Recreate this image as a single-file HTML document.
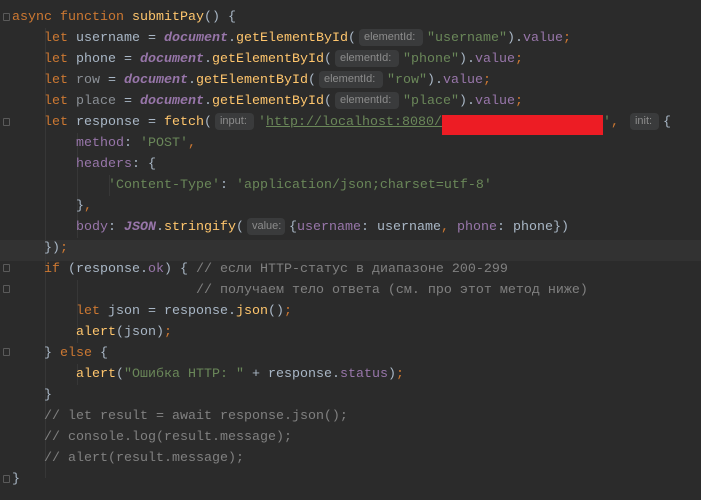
<!DOCTYPE html><html><head><meta charset="utf-8"><style>
body{margin:0;background:#2b2b2b;width:701px;height:500px;overflow:hidden;position:relative}
.c{position:absolute;left:12px;top:7px;font-family:"Liberation Mono","DejaVu Sans Mono",monospace;font-size:13.33px;color:#a9b7c6;white-space:pre;line-height:21px}
.k{color:#cc7832}.s{color:#6a8759}.f{color:#ffc66d}.d{color:#9876aa;font-style:italic;font-weight:bold}.p{color:#9876aa}.g{color:#808080}.u{color:#8a8f95}
.h{display:inline-block;box-sizing:border-box;height:17px;line-height:17px;vertical-align:1px;background:#3a3b3c;color:#8c8c8c;border-radius:4px;font-family:"Liberation Sans",sans-serif;font-size:11px;padding:0 5px;margin:0 4px 0 3px;font-style:normal;font-weight:normal}
.r{display:inline-block;width:161px;height:20px;background:#ed1c24;vertical-align:top;position:relative;top:3px}
.hl{position:absolute;left:0;top:240px;width:701px;height:21px;background:#323232}
.ig{position:absolute;width:1px;background:#373737}
.fm{position:absolute;left:3px;width:7px;height:8px;border:1px solid #5a5a5a;border-radius:1px;box-sizing:border-box}
</style></head><body>
<div class="hl"></div>
<div class="ig" style="left:45px;top:28px;height:450px"></div>
<div class="ig" style="left:77px;top:133px;height:105px"></div>
<div class="ig" style="left:109px;top:175px;height:21px"></div>
<div class="ig" style="left:77px;top:280px;height:63px"></div>
<div class="ig" style="left:77px;top:364px;height:21px"></div>
<div class="fm" style="top:13px"></div><div class="fm" style="top:118px"></div><div class="fm" style="top:264px"></div><div class="fm" style="top:285px"></div><div class="fm" style="top:348px"></div><div class="fm" style="top:475px"></div>
<div class="c"><span class="k">async function </span><span class="f">submitPay</span>() {
    <span class="k">let </span>username = <span class="d">document</span>.<span class="f">getElementById</span>(<span class="h" style="width:64px">elementId:</span><span class="s">"username"</span>).<span class="p">value</span><span class="k">;</span>
    <span class="k">let </span>phone = <span class="d">document</span>.<span class="f">getElementById</span>(<span class="h" style="width:64px">elementId:</span><span class="s">"phone"</span>).<span class="p">value</span><span class="k">;</span>
    <span class="k">let </span><span class="u">row</span> = <span class="d">document</span>.<span class="f">getElementById</span>(<span class="h" style="width:64px">elementId:</span><span class="s">"row"</span>).<span class="p">value</span><span class="k">;</span>
    <span class="k">let </span><span class="u">place</span> = <span class="d">document</span>.<span class="f">getElementById</span>(<span class="h" style="width:64px">elementId:</span><span class="s">"place"</span>).<span class="p">value</span><span class="k">;</span>
    <span class="k">let </span>response = <span class="f">fetch</span>(<span class="h" style="width:39px">input:</span><span class="s">'<u>http://localhost:8080/</u><span class="r"></span>'</span><span class="k">,</span> <span class="h" style="width:29px">init:</span>{
        <span class="p">method</span>: <span class="s">'POST'</span><span class="k">,</span>
        <span class="p">headers</span>: {
            <span class="s">'Content-Type'</span>: <span class="s">'application/json;charset=utf-8'</span>
        }<span class="k">,</span>
        <span class="p">body</span>: <span class="d">JSON</span>.<span class="f">stringify</span>(<span class="h" style="width:38px">value:</span>{<span class="p">username</span>: username<span class="k">, </span><span class="p">phone</span>: phone})
    })<span class="k">;</span>
    <span class="k">if </span>(response.<span class="p">ok</span>) { <span class="g">// если HTTP-статус в диапазоне 200-299</span>
                       <span class="g">// получаем тело ответа (см. про этот метод ниже)</span>
        <span class="k">let </span>json = response.<span class="f">json</span>()<span class="k">;</span>
        <span class="f">alert</span>(json)<span class="k">;</span>
    } <span class="k">else </span>{
        <span class="f">alert</span>(<span class="s">"Ошибка HTTP: "</span> + response.<span class="p">status</span>)<span class="k">;</span>
    }
    <span class="g">// let result = await response.json();</span>
    <span class="g">// console.log(result.message);</span>
    <span class="g">// alert(result.message);</span>
}</div>
</body></html>
